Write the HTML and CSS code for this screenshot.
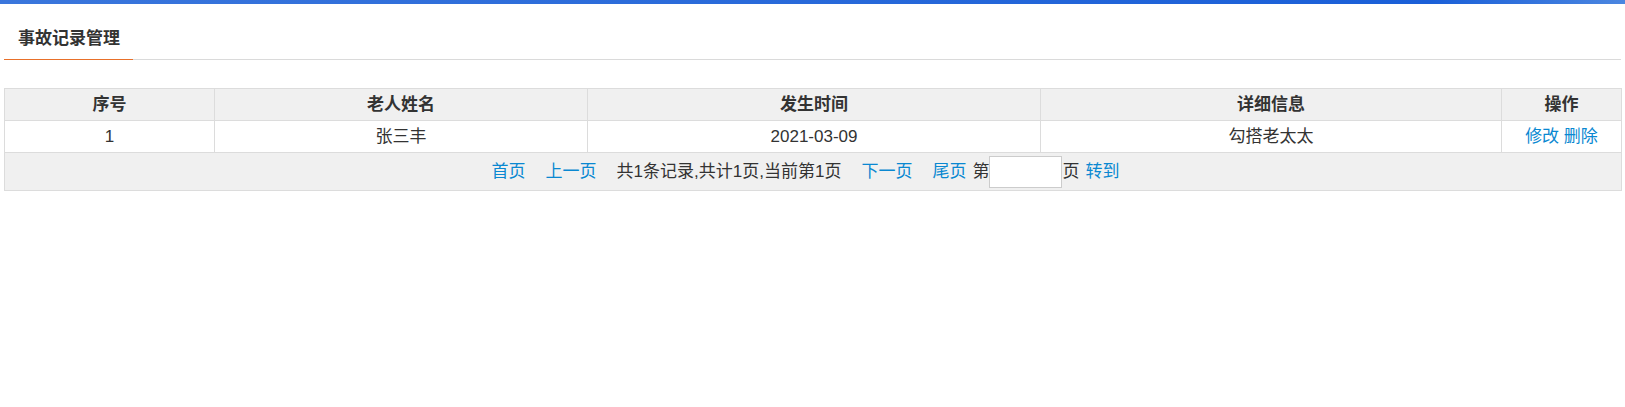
FILE: index.html
```html
<!DOCTYPE html>
<html>
<head>
  <meta charset="utf-8">
  <title>事故记录管理</title>
  <link rel="stylesheet" href="styles.css">
</head>
<body>
  <div class="topbar"></div>

  <div class="tabs">
    <div class="tab">事故记录管理</div>
  </div>

  <table class="list">
    <colgroup>
      <col class="c-no">
      <col class="c-name">
      <col class="c-time">
      <col class="c-info">
      <col class="c-op">
    </colgroup>
    <thead>
      <tr>
        <th>序号</th>
        <th>老人姓名</th>
        <th>发生时间</th>
        <th>详细信息</th>
        <th>操作</th>
      </tr>
    </thead>
    <tbody>
      <tr>
        <td>1</td>
        <td>张三丰</td>
        <td>2021-03-09</td>
        <td>勾搭老太太</td>
        <td><a href="#">修改</a> <a href="#">删除</a></td>
      </tr>
      <tr class="pager-row">
        <td colspan="5">
          <div class="pager">
            <a href="#" class="pg">首页</a>
            <a href="#" class="pg">上一页</a>
            <span class="pg">共1条记录,共计1页,当前第1页</span>
            <a href="#" class="pg">下一页</a>
            <a href="#" class="pg last">尾页</a>
            <span>第</span>
            <input type="text" class="goto">
            <span class="pg last">页</span>
            <a href="#">转到</a>
          </div>
        </td>
      </tr>
    </tbody>
  </table>
</body>
</html>
```

FILE: styles.css
```css
body {
  margin: 0;
  font-family: "Liberation Sans", "Noto Sans CJK SC", sans-serif;
  font-size: 17px;
  color: #333;
  background: #fff;
}

a {
  color: #0a88d1;
  text-decoration: none;
}

.topbar {
  height: 4px;
  background: linear-gradient(to right, #3a76dc, #1a5fd8 88%, #4b86e0);
}

.tabs {
  display: flex;
  margin: 0 4px;
  border-bottom: 1px solid #dadada;
}

.tab {
  padding: 23px 13px 8px 14px;
  line-height: 24px;
  font-weight: bold;
  border-bottom: 1px solid #e8702a;
  margin-bottom: -1px;
}

.list {
  width: calc(100% - 8px);
  margin: 28px 4px 0;
  border-collapse: collapse;
  table-layout: fixed;
  border: 1px solid #dcdcdc;
}

.c-no { width: 210px; }
.c-name { width: 373px; }
.c-time { width: 453px; }
.c-info { width: 461px; }
.c-op { width: 120px; }

.list th,
.list td {
  border: 1px solid #dcdcdc;
  text-align: center;
  padding: 0;
  height: 31px;
  line-height: 20px;
}

.list th {
  background-color: #f0f0f0;
  font-weight: bold;
}

.pager-row td {
  background-color: #f0f0f0;
  height: 37px;
}

.pager {
  display: flex;
  justify-content: center;
  align-items: center;
  padding-right: 15px;
}

.pg {
  margin-right: 20px;
}

.pg.last {
  margin-right: 6px;
}

.goto {
  width: 73px;
  height: 32px;
  box-sizing: border-box;
  border: 1px solid #cccccc;
  padding: 0 4px;
  margin: 0;
  background: #fff;
  font-size: 14px;
}
```
